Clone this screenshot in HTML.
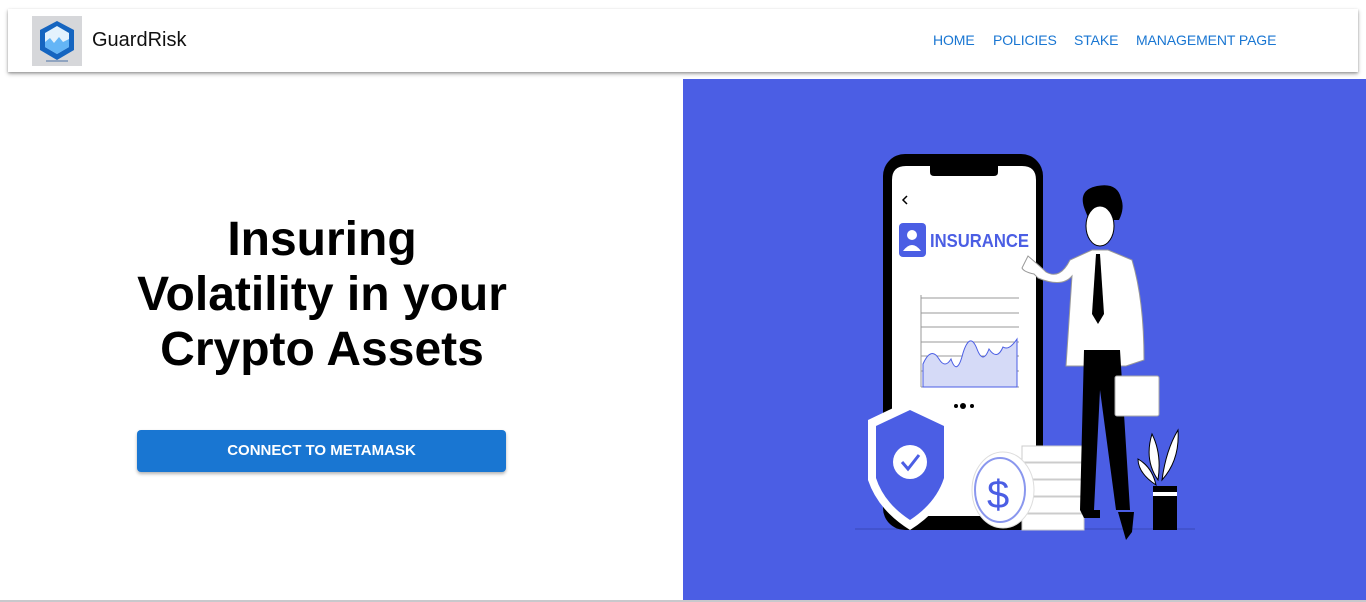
<!DOCTYPE html>
<html><head><style>
*{margin:0;padding:0;box-sizing:border-box}
body{width:1366px;height:602px;overflow:hidden;background:#fff;font-family:"Liberation Sans",sans-serif;position:relative}
.bar{position:absolute;left:8px;top:9px;width:1350px;height:63px;background:#fff;box-shadow:0 2px 4px rgba(0,0,0,.3),0 1px 2px rgba(0,0,0,.2)}
.logo{position:absolute;left:24px;top:7px;width:50px;height:50px;background:#d6d7da}
.brand{position:absolute;left:84px;top:20px;font-size:20px;color:#111}
.nav{position:absolute;top:23px;font-size:14px;color:#1976d2;letter-spacing:-.1px}
.blue{position:absolute;left:683px;top:79px;width:683px;height:521px;background:#4b5ee4}
h1{position:absolute;left:100px;width:444px;top:212px;text-align:center;font-size:48px;line-height:55px;font-weight:bold;color:#000}
.btn{position:absolute;left:137px;top:430px;width:369px;height:42px;background:#1976d2;border-radius:4px;color:#fff;font-weight:bold;font-size:15px;text-align:center;line-height:42px;box-shadow:0 2px 3px rgba(0,0,0,.3)}
.bot{position:absolute;left:0;top:600px;width:1366px;height:2px;background:#c8c8cc}
</style></head><body>
<div class="blue"></div>
<div class="bar">
 <div class="logo"><svg width="50" height="50" viewBox="0 0 50 50"><polygon points="25,5 42,14 42,34 25,44 8,34 8,14" fill="#1565c0"/><polygon points="25,10 37,17 37,31 25,38 13,31 13,17" fill="#e3f2fd"/><polygon points="13,26 18,22 22,27 27,21 31,26 37,23 37,31 25,38 13,31" fill="#64b5f6"/><rect x="14" y="44" width="22" height="2" fill="#90a4c0"/></svg></div>
 <div class="brand">GuardRisk</div>
 <div class="nav" style="left:925px">HOME</div>
 <div class="nav" style="left:985px">POLICIES</div>
 <div class="nav" style="left:1066px">STAKE</div>
 <div class="nav" style="left:1128px">MANAGEMENT PAGE</div>
</div>
<h1>Insuring<br>Volatility in your<br>Crypto Assets</h1>
<div class="btn">CONNECT TO METAMASK</div>
<svg style="position:absolute;left:840px;top:140px" width="380" height="410" viewBox="0 0 380 410">
 <line x1="15" y1="389" x2="355" y2="389" stroke="#3a48b8" stroke-width="1"/>
 <rect x="43" y="14" width="160" height="376" rx="22" fill="#000"/>
 <path d="M52 40 q0-14 14-14 h24 v6 q0 4 4 4 h60 q4 0 4-4 v-6 h24 q14 0 14 14 v322 q0 14-14 14 h-116 q-14 0-14-14z" fill="#fff"/>
 <rect x="115" y="27" width="16" height="2" fill="#000"/>
 <path d="M67 56 l-4 4 4 4" stroke="#000" fill="none" stroke-width="1.5"/>
 <rect x="59" y="83" width="27" height="34" rx="4" fill="#4b5ee4"/>
 <circle cx="72" cy="95" r="5" fill="#fff"/><path d="M63 111 q9-12 18 0z" fill="#fff"/>
 <text x="90" y="107" font-family="Liberation Sans" font-weight="bold" font-size="18" fill="#4b5ee4" textLength="99" lengthAdjust="spacingAndGlyphs">INSURANCE</text>
 <g stroke="#999" stroke-width="1"><line x1="81" y1="158" x2="179" y2="158"/><line x1="81" y1="173" x2="179" y2="173"/><line x1="81" y1="187" x2="179" y2="187"/><line x1="81" y1="202" x2="179" y2="202"/><line x1="81" y1="216" x2="179" y2="216"/><line x1="81" y1="231" x2="179" y2="231"/><line x1="81" y1="247" x2="179" y2="247"/><line x1="81" y1="155" x2="81" y2="247"/></g>
 <path d="M83 224 q8-18 16-5 q6 10 12 0 q6 18 12-6 q7-22 14-4 q6 16 12 0 q8 12 14 -2 q6 4 14-8 v48 h-94z" fill="#d5daf7" stroke="#4b5ee4"/>
 <circle cx="116" cy="266" r="2" fill="#000"/><circle cx="123" cy="266" r="3" fill="#000"/><circle cx="132" cy="266" r="2" fill="#000"/>
 <path d="M70 260 l42 20 v60 q-10 30-42 50 q-32-20-42-50 v-60z" fill="#fff"/>
 <path d="M70 270 l34 16 v52 q-8 25-34 42 q-26-17-34-42 v-52z" fill="#4b5ee4"/>
 <circle cx="70" cy="322" r="17" fill="#fff"/><path d="M62 322 l6 7 l11-14" stroke="#4b5ee4" stroke-width="3" fill="none"/>
 <g fill="#fff" stroke="#ccc"><rect x="182" y="306" width="62" height="16"/><rect x="182" y="323" width="62" height="16"/><rect x="182" y="340" width="60" height="16"/><rect x="182" y="357" width="60" height="16"/><rect x="182" y="374" width="62" height="16"/></g>
 <ellipse cx="163" cy="350" rx="31" ry="38" fill="#fff" stroke="#ddd"/><ellipse cx="160" cy="350" rx="25" ry="32" fill="#fff" stroke="#8a97ee" stroke-width="2"/>
 <text x="147" y="368" font-family="Liberation Sans" font-size="40" fill="#4b5ee4">$</text>
 <path d="M245 70 q-8-20 12-24 q20-4 24 12 q4 10-2 22 h-30z" fill="#000"/>
 <ellipse cx="260" cy="86" rx="14" ry="20" fill="#fff" stroke="#000"/>
 <path d="M252 110 h16 l24 10 q12 40 12 100 l-18 6 h-60 l6-90 q-10 12-34 2 l-4-4 q-10-2-12-6 l6-12 q14 12 18 16 q14 8 24-12z" fill="#fff" stroke="#999"/>
 <path d="M256 114 l4 0 l4 60 l-6 10 l-6-10z" fill="#000"/>
 <path d="M244 210 h36 l10 160 h-14 l-16-120 l-6 120 h-14z" fill="#000"/>
 <path d="M240 370 h20 v8 h-16z M278 372 h16 l-2 20 l-6 8 z" fill="#000"/>
 <rect x="275" y="236" width="44" height="40" rx="2" fill="#fff" stroke="#aaa"/>
 <path d="M318 340 q-14-20-6-46 q10 20 6 46z M322 340 q4-30 16-50 q2 30-16 50z M316 345 q-18-12-18-26 q14 8 18 26z" fill="#fff" stroke="#000"/>
 <rect x="313" y="346" width="24" height="44" fill="#000"/><rect x="313" y="352" width="24" height="4" fill="#fff"/>
</svg>
<div class="bot"></div>
</body></html>
